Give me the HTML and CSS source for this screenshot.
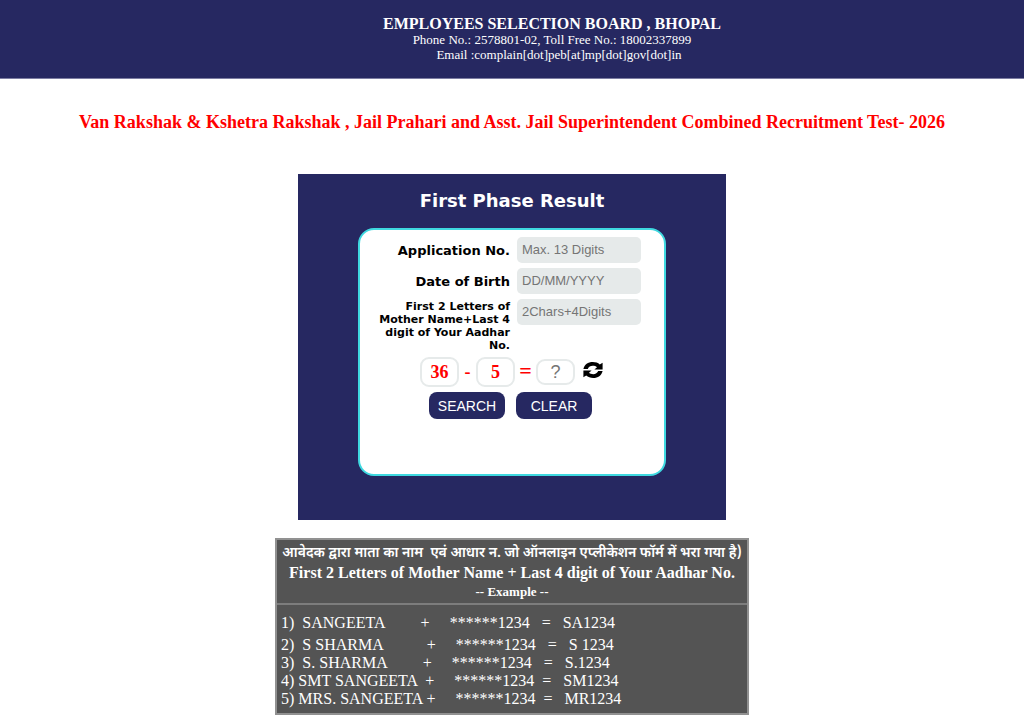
FILE: index.html
```html
<!DOCTYPE html>
<html lang="en">
<head>
    <meta charset="UTF-8">
    <meta name="viewport" content="width=device-width, initial-scale=1.0">
    <title>First Phase Result</title>
    <link rel="stylesheet" href="styles.css">
</head>
<body>
    <header class="header">
        <h1>EMPLOYEES SELECTION BOARD , BHOPAL</h1>
        <p>Phone No.: 2578801-02, Toll Free No.: 18002337899</p>
        <p class="email">Email :complain[dot]peb[at]mp[dot]gov[dot]in</p>
    </header>
    <main>
        <h2 class="exam-title">Van Rakshak &amp; Kshetra Rakshak , Jail Prahari and Asst. Jail Superintendent Combined Recruitment Test- 2026</h2>
        <section class="panel">
            <h3>First Phase Result</h3>
            <form class="box">
                <div class="row">
                    <label for="appno">Application No.</label>
                    <input type="text" id="appno" maxlength="13" placeholder="Max. 13 Digits">
                </div>
                <div class="row">
                    <label for="dob">Date of Birth</label>
                    <input type="text" id="dob" placeholder="DD/MM/YYYY">
                </div>
                <div class="row row-small">
                    <label for="code">First 2 Letters of Mother Name+Last 4 digit of Your Aadhar No.</label>
                    <input type="text" id="code" maxlength="6" placeholder="2Chars+4Digits">
                </div>
                <div class="captcha">
                    <span class="num">36</span>
                    <span class="sign">-</span>
                    <span class="num">5</span>
                    <span class="sign equals">=</span>
                    <input type="text" class="answer" placeholder="?" aria-label="Answer">
                    <button type="button" class="refresh" aria-label="Refresh">
                        <svg viewBox="0 0 20 16" width="20" height="16">
                            <path d="M.4 7C1.4 2.6 5 0 9.8 0c2.8 0 5.2.8 7 2.4L19.6.8v6.8h-8.2l2.6-2.4C12.8 4.2 11.4 3.8 9.8 3.8 7.4 3.8 5.6 5 4.8 7z"/>
                            <path d="M19.6 9c-1 4.4-4.6 7-9.4 7-2.8 0-5.2-.8-7-2.4L.4 15.2V8.4h8.2L6 10.8c1.2 1 2.6 1.4 4.2 1.4 2.4 0 4.2-1.2 5-3.2z"/>
                        </svg>
                    </button>
                </div>
                <div class="buttons">
                    <button type="button">SEARCH</button>
                    <button type="reset">CLEAR</button>
                </div>
            </form>
        </section>
        <section class="help">
            <div class="help-head">
                <p class="hindi" lang="hi">आवेदक द्वारा माता का नाम&nbsp; एवं आधार न. जो ऑनलाइन एप्लीकेशन फॉर्म में भरा गया है)</p>
                <p>First 2 Letters of Mother Name + Last 4 digit of Your Aadhar No.</p>
                <p class="example">-- Example --</p>
            </div>
            <div class="help-body">
                <p class="first">1)  SANGEETA         +     ******1234   =   SA1234</p>
                <p>2)  S SHARMA           +     ******1234   =   S 1234</p>
                <p>3)  S. SHARMA         +     ******1234   =   S.1234</p>
                <p>4) SMT SANGEETA  +     ******1234  =   SM1234</p>
                <p>5) MRS. SANGEETA +     ******1234  =   MR1234</p>
            </div>
        </section>
    </main>
</body>
</html>
```

FILE: styles.css
```css
* {
    margin: 0;
    padding: 0;
    box-sizing: border-box;
}

body {
    background-color: white;
    font-family: "Liberation Serif", "Times New Roman", serif;
}

.header {
    padding: 16px 0 16px 80px;
    background-color: #262861;
    border-bottom: 1px solid #7c7da2;
    color: white;
    text-align: center;
    font-size: 13px;
    line-height: 15px;
}

.header h1 {
    font-size: 16px;
    line-height: 16px;
}

.header .email {
    padding-left: 14px;
}

.exam-title {
    margin: 32px 0 41px;
    color: red;
    text-align: center;
    font-size: 18px;
    line-height: 22px;
}

.panel {
    width: 428px;
    margin: 0 auto;
    padding: 16px 60px 44px;
    background-color: #262861;
}

.panel h3 {
    margin-bottom: 16px;
    color: white;
    text-align: center;
    font-family: Verdana, "DejaVu Sans", sans-serif;
    font-size: 18px;
    line-height: 22px;
}

.box {
    height: 248px;
    padding: 7px 16px;
    border: 2px solid #3fd9e0;
    border-radius: 16px;
    background-color: white;
}

.row {
    display: flex;
    align-items: center;
    gap: 7px;
    height: 26px;
    margin-bottom: 5px;
}

.row label {
    width: 134px;
    text-align: right;
    font-family: Verdana, "DejaVu Sans", sans-serif;
    font-size: 13px;
    font-weight: bold;
    line-height: 13px;
}

.row input {
    width: 124px;
    height: 26px;
    padding: 0 5px 2px;
    border: none;
    border-radius: 5px;
    background-color: #e6eaea;
    font-family: "Liberation Sans", Arial, sans-serif;
    font-size: 13px;
}

.row-small {
    align-items: flex-start;
    height: 54px;
    margin-bottom: 4px;
}

.row-small label {
    padding-top: 1px;
    font-size: 11px;
}

.captcha {
    display: flex;
    align-items: center;
    gap: 4px;
    padding-left: 44px;
    color: red;
    font-size: 18px;
    font-weight: bold;
}

.num,
.answer {
    width: 39px;
    height: 30px;
    border: 2px solid #e6eaea;
    border-radius: 9px;
    text-align: center;
    line-height: 26px;
}

.answer {
    height: 26px;
    font-family: "Liberation Sans", Arial, sans-serif;
    font-size: 18px;
}

.sign {
    width: 9px;
    text-align: center;
}

.equals {
    width: 13px;
    padding-bottom: 3px;
    font-size: 22px;
}

.refresh {
    margin-left: 4px;
    padding-bottom: 4px;
    border: none;
    background: none;
    line-height: 0;
}

.buttons {
    display: flex;
    gap: 11px;
    margin-top: 5px;
    padding-left: 53px;
}

.buttons button {
    width: 76px;
    height: 27px;
    border: none;
    border-radius: 8px;
    background-color: #262861;
    color: white;
    font-family: "Liberation Sans", Arial, sans-serif;
    font-size: 14px;
}

.help {
    width: 474px;
    margin: 18px auto 0;
    border: 2px solid #919191;
    background-color: #545454;
    color: white;
}

.help-head {
    padding: 5px 0 2px;
    border-bottom: 2px solid #7d7d7d;
    text-align: center;
    font-size: 16px;
    font-weight: bold;
    line-height: 19px;
}

.help-head .hindi {
    font-family: "Noto Sans Devanagari", "Noto Sans", sans-serif;
    font-size: 14px;
    font-weight: 600;
    line-height: 18px;
    white-space: nowrap;
}

.example {
    font-size: 13px;
}

.help-body {
    padding: 9px 4px 5px;
    font-size: 16px;
    line-height: 18px;
}

.help-body p {
    white-space: pre;
}

.help-body .first {
    margin-bottom: 4px;
}
```
